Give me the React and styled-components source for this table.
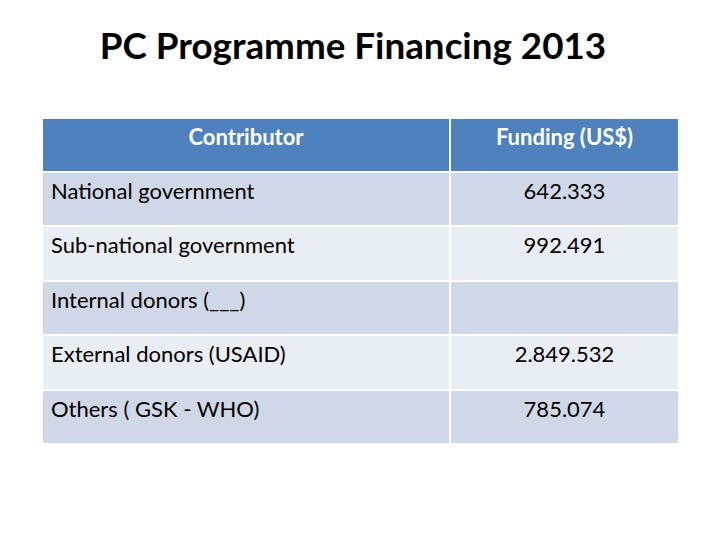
import React from "react";
import styled, { createGlobalStyle } from "styled-components";

const Global = createGlobalStyle`
  html, body { margin: 0; padding: 0; background: #ffffff; }
  body { font-family: Lato, "Open Sans", sans-serif; }
`;

const Slide = styled.div`
  width: 720px;
  height: 540px;
  background: #ffffff;
  display: flex;
  flex-direction: column;
  align-items: stretch;
  box-sizing: border-box;
  padding: 0 42px 0 43px;
`;

const Title = styled.h1`
  margin: 0;
  box-sizing: border-box;
  height: 119px;
  padding: 23px 15px 0 0;
  font-family: Lato, sans-serif;
  font-weight: 700;
  font-size: 36.8px;
  line-height: 44px;
  color: #000000;
  text-align: center;
  white-space: nowrap;
`;

const Table = styled.div`
  display: grid;
  grid-template-columns: 406px 227px;
  grid-template-rows: 52px repeat(5, 52.4px);
  column-gap: 2px;
  row-gap: 2px;
  background: #ffffff;
`;

const Cell = styled.div`
  background: ${(p) => (p.$head ? "#4f81bd" : p.$odd ? "#d0d8e8" : "#e9edf4")};
  color: ${(p) => (p.$head ? "#ffffff" : "#000000")};
  font-family: Lato, sans-serif;
  font-weight: ${(p) => (p.$head ? 700 : 400)};
  font-size: 22px;
  line-height: 26px;
  padding: 5px 8px;
  text-align: ${(p) => (p.$center ? "center" : "left")};
  white-space: nowrap;
`;

const rows = [
  ["National government", "642.333"],
  ["Sub-national government", "992.491"],
  ["Internal donors (___)", ""],
  ["External donors (USAID)", "2.849.532"],
  ["Others ( GSK - WHO)", "785.074"],
];

export default function App() {
  return (
    <>
      <Global />
      <Slide>
        <Title>PC Programme Financing 2013</Title>
        <Table>
          <Cell $head $center>Contributor</Cell>
          <Cell $head $center>Funding (US$)</Cell>
          {rows.map(([name, value], i) => (
            <React.Fragment key={name}>
              <Cell $odd={i % 2 === 0}>{name}</Cell>
              <Cell $odd={i % 2 === 0} $center>{value}</Cell>
            </React.Fragment>
          ))}
        </Table>
      </Slide>
    </>
  );
}
